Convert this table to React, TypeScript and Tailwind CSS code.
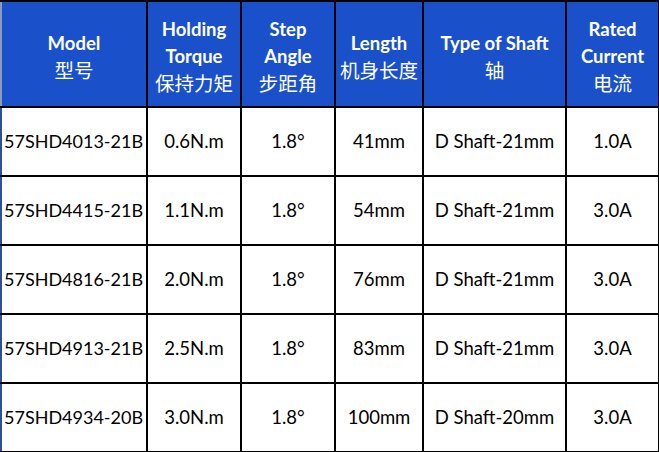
const rows = [
  ["57SHD4013-21B", "0.6N.m", "1.8°", "41mm", "D Shaft-21mm", "1.0A"],
  ["57SHD4415-21B", "1.1N.m", "1.8°", "54mm", "D Shaft-21mm", "3.0A"],
  ["57SHD4816-21B", "2.0N.m", "1.8°", "76mm", "D Shaft-21mm", "3.0A"],
  ["57SHD4913-21B", "2.5N.m", "1.8°", "83mm", "D Shaft-21mm", "3.0A"],
  ["57SHD4934-20B", "3.0N.m", "1.8°", "100mm", "D Shaft-20mm", "3.0A"],
];

const headers = [
  ["Model", "型号"],
  ["Holding", "Torque", "保持力矩"],
  ["Step", "Angle", "步距角"],
  ["Length", "机身长度"],
  ["Type of Shaft", "轴"],
  ["Rated", "Current", "电流"],
];

export default function App() {
  return (
    <div className="w-[659px] h-[452px] bg-white overflow-hidden font-['Lato','Noto_Sans_CJK_SC',sans-serif]">
      <table className="table-fixed border-collapse w-[658px]">
        <colgroup>
          <col className="w-[146px]" />
          <col className="w-[94px]" />
          <col className="w-[94px]" />
          <col className="w-[88px]" />
          <col className="w-[143px]" />
          <col className="w-[93px]" />
        </colgroup>
        <thead>
          <tr className="h-[106px] bg-[#1a51cb]">
            {headers.map((lines, i) => (
              <th
                key={i}
                className="border-2 border-black first:border-l-[#8a9bbd] text-white font-bold text-[18.5px] leading-[27px] align-middle text-center px-0 pt-[5px] whitespace-nowrap"
              >
                {lines.map((l, j) => (
                  <div key={j} className={/[\u4e00-\u9fff]/.test(l) ? "font-normal text-[19.5px]" : ""}>
                    {l}
                  </div>
                ))}
              </th>
            ))}
          </tr>
        </thead>
        <tbody>
          {rows.map((r, i) => (
            <tr key={i} className="h-[69px]">
              {r.map((c, j) => (
                <td
                  key={j}
                  className={`border-2 border-black text-black align-middle whitespace-nowrap ${
                    j === 0 ? "text-left pl-[2px] border-l-[#2f4f9a] text-[18px]" : "text-center text-[18.5px]"
                  }`}
                >
                  {c}
                </td>
              ))}
            </tr>
          ))}
        </tbody>
      </table>
    </div>
  );
}
